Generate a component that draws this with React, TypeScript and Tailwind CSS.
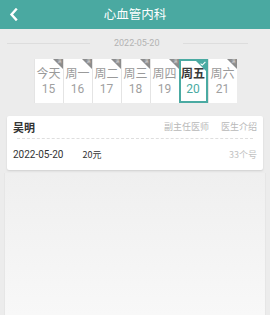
import React from 'react';

const days = [
  { label: '今天', num: '15' },
  { label: '周一', num: '16' },
  { label: '周二', num: '17' },
  { label: '周三', num: '18' },
  { label: '周四', num: '19' },
  { label: '周五', num: '20', active: true },
  { label: '周六', num: '21' },
];

const DayCard = ({ label, num, active }: { label: string; num: string; active?: boolean }) => (
  <div
    className={`relative w-[29px] h-[44px] bg-white flex flex-col items-center justify-center whitespace-nowrap ${
      active ? 'border-2 border-[#4aaaa2]' : 'border-l border-[#e4e4e4]'
    }`}
  >
    {/* corner badge */}
    <div
      className={`absolute top-0 right-0 w-0 h-0 border-t-[10px] border-l-[10px] border-l-transparent ${
        active ? 'border-t-[#4aaaa2]' : 'border-t-[#8c8c8c]'
      }`}
    />
    {active ? (
      <svg className="absolute top-[0px] right-[0px]" width="6" height="5" viewBox="0 0 6 5">
        <path d="M0.6 2.6 L2.3 4.1 L5.4 0.8" stroke="#fff" strokeWidth="1.1" fill="none" />
      </svg>
    ) : (
      <span className="absolute top-[0px] right-[1px] text-[4px] leading-none text-[#ddd]">满</span>
    )}
    <span className={`text-[12px] leading-[16px] ${active ? 'text-[#3a3a3a] font-semibold' : 'text-[#9a9a9a]'}`}>{label}</span>
    <span
      className={`text-[12px] leading-[16px] ${active ? 'text-[#4aaaa2]' : 'text-[#a0a0a0]'}`}
      style={{ fontFamily: 'Roboto, "Liberation Sans", sans-serif' }}
    >
      {num}
    </span>
  </div>
);

export default function App() {
  return (
    <div
      className="w-[270px] h-[315px] bg-[#ececec] flex flex-col overflow-hidden"
      style={{ fontFamily: '"Noto Sans CJK SC", "Liberation Sans", sans-serif' }}
    >
      {/* Header */}
      <div className="h-[29px] bg-[#4aa9a1] flex items-center relative shrink-0">
        <svg className="absolute left-[9px] top-[8px]" width="9" height="13" viewBox="0 0 9 13">
          <path d="M7 1.5 L2.5 6.5 L7 11.5" stroke="#fff" strokeWidth="2.4" fill="none" strokeLinecap="square" />
        </svg>
        <div className="flex-1 text-center text-white text-[12.5px] leading-none">心血管内科</div>
      </div>

      {/* Date divider */}
      <div className="flex items-center ml-[7px] mr-[22px] mt-[7px] h-[14px]">
        <div className="w-[83px] h-px bg-[#dddddd]" />
        <span
          className="px-[24px] text-[9px] text-[#b3b3b3] leading-none"
          style={{ fontFamily: 'Roboto, "Liberation Sans", sans-serif' }}
        >
          2022-05-20
        </span>
        <div className="flex-1 h-px bg-[#dddddd]" />
      </div>

      {/* Day cards */}
      <div className="flex justify-center mt-[9px]">
        {days.map((d) => (
          <DayCard key={d.num} {...d} />
        ))}
      </div>

      {/* Doctor card */}
      <div className="mx-[7px] mt-[13px] bg-white rounded-[2px] shadow-[0_1px_2px_rgba(0,0,0,0.12)]">
        <div className="flex items-center h-[22px] px-[6px]">
          <span className="text-[11px] font-semibold text-[#333]">吴明</span>
          <span className="ml-auto text-[9px] text-[#b8b8b8]">副主任医师</span>
          <span className="ml-[12px] text-[9px] text-[#b8b8b8]">医生介绍</span>
        </div>
        <div className="mx-[10px] border-t border-dashed border-[#dedede]" />
        <div className="flex items-center h-[31px] px-[6px]">
          <span
            className="text-[10px] text-[#333]"
            style={{ fontFamily: 'Roboto, "Liberation Sans", sans-serif' }}
          >
            2022-05-20
          </span>
          <span className="ml-[19px] text-[9px] text-[#333]">20元</span>
          <span className="ml-auto text-[9px] text-[#c2c2c2]">33个号</span>
        </div>
      </div>

      {/* Empty list area */}
      <div className="flex-1 mx-[4px] mt-[3px] border-x border-[#e6e6e6] bg-gradient-to-b from-[#efefef] to-[#f8f8f8]" />
    </div>
  );
}
